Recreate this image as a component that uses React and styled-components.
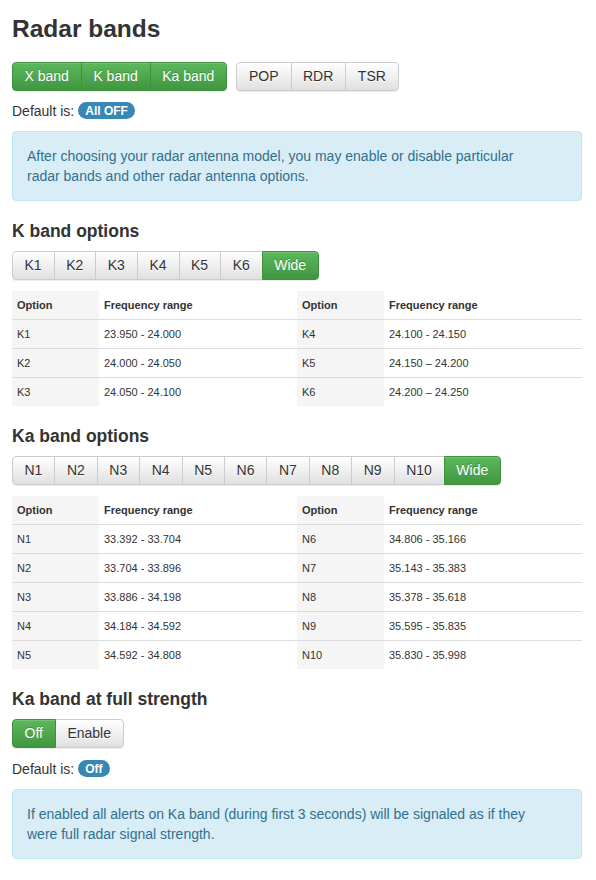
import React from 'react'
import styled, { createGlobalStyle } from 'styled-components'

const Global = createGlobalStyle`
  body {
    margin: 0;
    background: #fff;
    color: #333;
    font-family: "Liberation Sans", Arial, sans-serif;
    font-size: 14px;
    line-height: 20px;
  }
`

const Page = styled.div`
  padding: 15px 14px 20px 12px;
`

const Title = styled.h1`
  margin: 0 0 20px;
  font-size: 24.5px;
  line-height: 27px;
  font-weight: bold;
  color: #333;
`

const Heading = styled.h3`
  margin: 20px 0 10px;
  font-size: 17.5px;
  line-height: 20px;
  font-weight: bold;
  color: #333;
`

const Toolbar = styled.div`
  display: flex;
  gap: 9px;
  margin-bottom: ${p => p.$mb || 10}px;
`

const Group = styled.div`
  display: inline-flex;
  border-radius: 4px;
  box-shadow: 0 1px 1px rgba(0, 0, 0, 0.075);
`

const Btn = styled.button`
  font-family: inherit;
  font-size: 14px;
  line-height: 19px;
  padding: 4px 12px 4px 11.5px;
  margin: 0;
  margin-left: -1px;
  cursor: pointer;
  border: 1px solid ${p => (p.$on ? '#3e8f3e' : '#ccc')};
  color: ${p => (p.$on ? '#fff' : '#333')};
  background: ${p =>
    p.$on
      ? 'linear-gradient(to bottom, #5cb85c 0%, #419641 100%)'
      : 'linear-gradient(to bottom, #fff 0%, #e0e0e0 100%)'};
  box-shadow: inset 0 1px 0 rgba(255, 255, 255, 0.15);
  text-shadow: ${p => (p.$on ? '0 -1px 0 rgba(0,0,0,.2)' : '0 1px 0 #fff')};
  border-radius: 0;
  position: relative;
  z-index: ${p => (p.$on ? 1 : 0)};
  &:first-child {
    margin-left: 0;
    border-radius: 4px 0 0 4px;
  }
  &:last-child {
    border-radius: 0 4px 4px 0;
  }
`

const DefaultLine = styled.div`
  margin-bottom: 10px;
  line-height: 20px;
`

const Badge = styled.span`
  display: inline-block;
  margin-left: 4px;
  padding: 2px 7px 1px;
  border-radius: 10px;
  background: #3887b4;
  color: #fff;
  font-size: 12px;
  font-weight: bold;
  line-height: 14px;
  vertical-align: 1px;
`

const Alert = styled.div`
  padding: 14px 14px;
  border: 1px solid #bce8f1;
  border-radius: 4px;
  background: #d9edf7;
  color: #31708f;
  line-height: 20px;
`

const AlertText = styled.p`
  margin: 0;
  max-width: 510px;
`

const Table = styled.table`
  width: 100%;
  border-collapse: collapse;
  font-size: 11px;
  margin-bottom: 0;
  table-layout: fixed;
`

const Cell = styled.td`
  height: 28px;
  padding: 0 5px;
  vertical-align: middle;
  line-height: 14px;
  font-weight: ${p => (p.$head ? 'bold' : 'normal')};
  background: ${p => (p.$grey ? '#f5f5f5' : '#fff')};
  border-top: ${p => (p.$head ? 'none' : '1px solid #ddd')};
`

const kRows = [
  ['K1', '23.950 - 24.000', 'K4', '24.100 - 24.150'],
  ['K2', '24.000 - 24.050', 'K5', '24.150 – 24.200'],
  ['K3', '24.050 - 24.100', 'K6', '24.200 – 24.250'],
]

const kaRows = [
  ['N1', '33.392 - 33.704', 'N6', '34.806 - 35.166'],
  ['N2', '33.704 - 33.896', 'N7', '35.143 - 35.383'],
  ['N3', '33.886 - 34.198', 'N8', '35.378 - 35.618'],
  ['N4', '34.184 - 34.592', 'N9', '35.595 - 35.835'],
  ['N5', '34.592 - 34.808', 'N10', '35.830 - 35.998'],
]

function FreqTable({ rows }) {
  return (
    <Table>
      <colgroup>
        <col style={{ width: 87 }} />
        <col style={{ width: 198 }} />
        <col style={{ width: 87 }} />
        <col />
      </colgroup>
      <tbody>
        <tr>
          <Cell $head $grey>Option</Cell>
          <Cell $head>Frequency range</Cell>
          <Cell $head $grey>Option</Cell>
          <Cell $head>Frequency range</Cell>
        </tr>
        {rows.map(r => (
          <tr key={r[0]}>
            <Cell $grey>{r[0]}</Cell>
            <Cell>{r[1]}</Cell>
            <Cell $grey>{r[2]}</Cell>
            <Cell>{r[3]}</Cell>
          </tr>
        ))}
      </tbody>
    </Table>
  )
}

function ButtonGroup({ items, active }) {
  return (
    <Group>
      {items.map(t => (
        <Btn key={t} $on={active.includes(t)}>
          {t}
        </Btn>
      ))}
    </Group>
  )
}

export default function App() {
  return (
    <Page>
      <Global />
      <Title>Radar bands</Title>
      <Toolbar>
        <ButtonGroup items={['X band', 'K band', 'Ka band']} active={['X band', 'K band', 'Ka band']} />
        <ButtonGroup items={['POP', 'RDR', 'TSR']} active={[]} />
      </Toolbar>
      <DefaultLine>
        Default is:<Badge>All OFF</Badge>
      </DefaultLine>
      <Alert>
        <AlertText>
          After choosing your radar antenna model, you may enable or disable particular radar bands
          and other radar antenna options.
        </AlertText>
      </Alert>

      <Heading>K band options</Heading>
      <Toolbar $mb={11}>
        <ButtonGroup items={['K1', 'K2', 'K3', 'K4', 'K5', 'K6', 'Wide']} active={['Wide']} />
      </Toolbar>
      <FreqTable rows={kRows} />

      <Heading>Ka band options</Heading>
      <Toolbar $mb={11}>
        <ButtonGroup
          items={['N1', 'N2', 'N3', 'N4', 'N5', 'N6', 'N7', 'N8', 'N9', 'N10', 'Wide']}
          active={['Wide']}
        />
      </Toolbar>
      <FreqTable rows={kaRows} />

      <Heading>Ka band at full strength</Heading>
      <Toolbar $mb={11}>
        <ButtonGroup items={['Off', 'Enable']} active={['Off']} />
      </Toolbar>
      <DefaultLine>
        Default is:<Badge>Off</Badge>
      </DefaultLine>
      <Alert>
        <AlertText>
          If enabled all alerts on Ka band (during first 3 seconds) will be signaled as if they were
          full radar signal strength.
        </AlertText>
      </Alert>
    </Page>
  )
}
